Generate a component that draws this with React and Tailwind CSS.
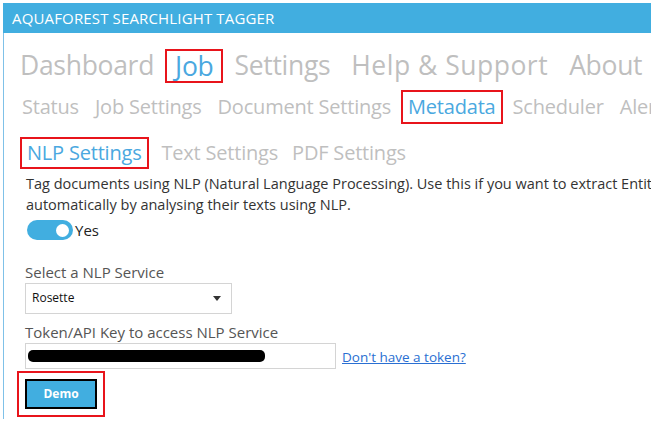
const FONT = "font-['Open_Sans','Noto_Sans',sans-serif]";

function Boxed({ children, className = "" }) {
  return (
    <span className={`border-2 border-[#e8141b] ${className}`}>{children}</span>
  );
}

export default function App() {
  return (
    <div className={`w-[651px] h-[431px] bg-white overflow-hidden pt-[3px] ${FONT}`}>
      <div className="ml-[3px] h-[30px] bg-[#41aee0] flex items-center pl-[9px]">
        <span className="text-white text-[15px] tracking-[0.15px]">AQUAFOREST SEARCHLIGHT TAGGER</span>
      </div>

      <div className="ml-[3px] border-l border-[#7fc1e8] h-[386px] flex flex-col">
        {/* top nav */}
        <div className="flex items-center gap-[21px] pl-[16px] mt-[15px] h-[36px] text-[26.5px] text-[#bfbfbf] whitespace-nowrap tracking-[-0.3px]">
          <span>Dashboard</span>
          <Boxed className="text-[#4aa8e0] px-[8px] -mx-[10px] leading-[30px]">Job</Boxed>
          <span>Settings</span>
          <span className="tracking-[0.5px]">Help &amp; Support</span>
          <span>About</span>
        </div>

        {/* second nav */}
        <div className="flex items-center gap-[16px] pl-[18px] mt-[6px] h-[34px] text-[20px] text-[#bfbfbf] whitespace-nowrap tracking-[-0.2px]">
          <span>Status</span>
          <span>Job Settings</span>
          <span>Document Settings</span>
          <Boxed className="text-[#4aa8e0] px-[5px] -mx-[6px] leading-[30px]">Metadata</Boxed>
          <span>Scheduler</span>
          <span>Alerts</span>
        </div>

        {/* third nav */}
        <div className="flex items-center gap-[14px] pl-[17px] mt-[13px] h-[32px] text-[20px] text-[#bfbfbf] whitespace-nowrap tracking-[-0.2px]">
          <Boxed className="text-[#4aa8e0] px-[5px] -mx-[1px] leading-[28px]">NLP Settings</Boxed>
          <span>Text Settings</span>
          <span>PDF Settings</span>
        </div>

        <div className="pl-[22px] mt-[4px] text-[14.5px] leading-[21px] text-[#333] whitespace-nowrap">
          <p>Tag documents using NLP (Natural Language Processing). Use this if you want to extract Entities</p>
          <p>automatically by analysing their texts using NLP.</p>
        </div>

        <div className="pl-[23px] mt-[4px] flex items-center gap-[2px]">
          <div className="w-[46px] h-[20px] rounded-full bg-[#41aee0] flex items-center justify-end pr-[4px]">
            <div className="w-[13px] h-[13px] rounded-full bg-white" />
          </div>
          <span className="text-[15px] text-[#222]">Yes</span>
        </div>

        <div className="pl-[21px] mt-[20px] text-[15px] text-[#555] leading-[20px]">Select a NLP Service</div>
        <div className="ml-[21px] mt-[1px] w-[207px] h-[31px] border border-[#d4d4d4] flex items-center justify-between px-[6px]">
          <span className="text-[12px] text-[#111]">Rosette</span>
          <svg width="8" height="5" viewBox="0 0 8 5" className="mr-[4px]">
            <path d="M0 0h8L4 5z" fill="#333" />
          </svg>
        </div>

        <div className="pl-[21px] mt-[8px] text-[15px] text-[#555] leading-[20px]">Token/API Key to access NLP Service</div>
        <div className="flex items-end ml-[21px] mt-[1px]">
          <div className="w-[311px] h-[26px] border border-[#d4d4d4] flex items-center pl-[2px]">
            <div className="w-[237px] h-[12px] bg-black rounded-[5px]" />
          </div>
          <a href="#" className="ml-[6px] mb-[1px] text-[13.5px] text-[#2a6fd2] underline">Don&apos;t have a token?</a>
        </div>

        <div className="ml-[13px] mt-[2px] w-[88px] h-[46px] border-2 border-[#e8141b] flex items-center justify-center">
          <button className="w-[72px] h-[30px] bg-[#41aee0] border-2 border-black text-white text-[12px] font-bold">
            Demo
          </button>
        </div>
      </div>
    </div>
  );
}
